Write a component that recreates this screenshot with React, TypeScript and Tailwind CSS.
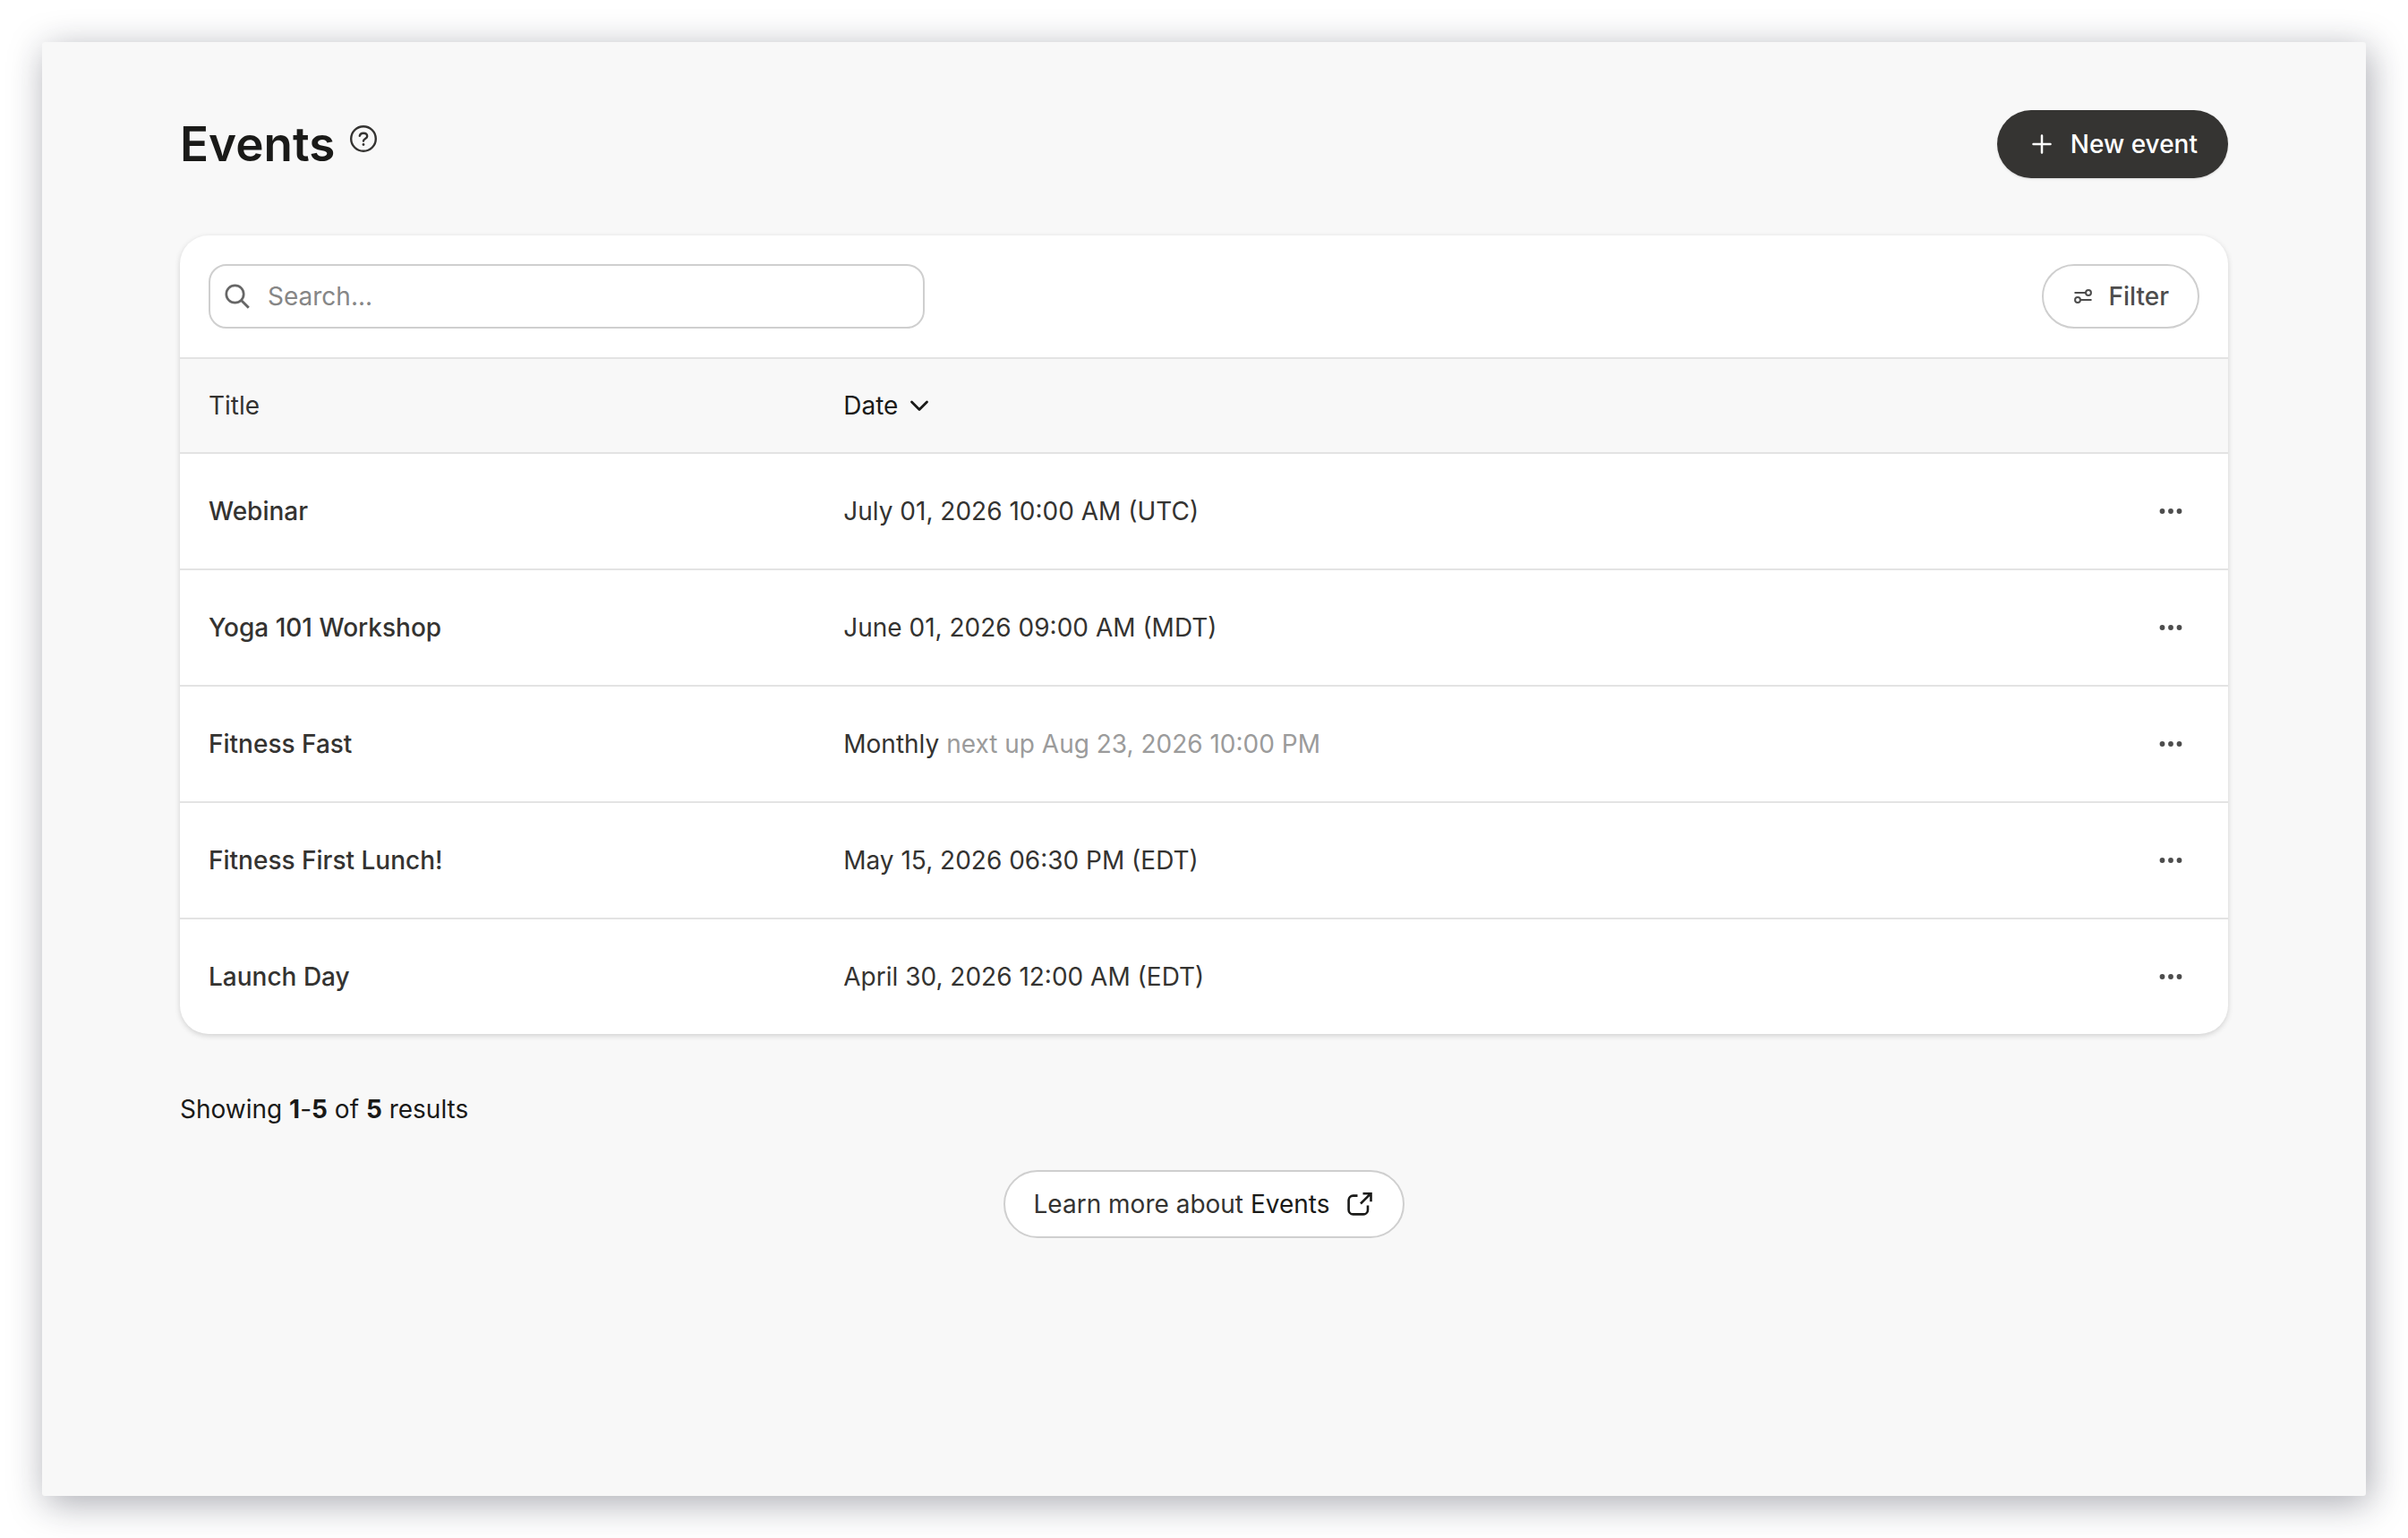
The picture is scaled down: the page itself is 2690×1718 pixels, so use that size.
import type { ReactNode } from 'react';

type EventRow = {
  title: string;
  date: string;
  next?: string;
};

const events: EventRow[] = [
  { title: 'Webinar', date: 'July 01, 2026 10:00 AM (UTC)' },
  { title: 'Yoga 101 Workshop', date: 'June 01, 2026 09:00 AM (MDT)' },
  { title: 'Fitness Fast', date: 'Monthly', next: 'next up Aug 23, 2026 10:00 PM' },
  { title: 'Fitness First Lunch!', date: 'May 15, 2026 06:30 PM (EDT)' },
  { title: 'Launch Day', date: 'April 30, 2026 12:00 AM (EDT)' },
];

function Icon({ className, children }: { className: string; children: ReactNode }) {
  return (
    <svg viewBox="0 0 32 32" fill="none" stroke="currentColor" aria-hidden="true" className={className}>
      {children}
    </svg>
  );
}

function PageHeader() {
  return (
    <header className="flex items-center justify-between">
      <div className="flex items-start gap-4">
        <h1 className="text-[53px] leading-[64px] font-semibold text-[#1a1a18]">Events</h1>
        <button type="button" aria-label="About events" className="mt-2.5 text-[#343331]">
          <Icon className="size-8">
            <circle cx="16" cy="16" r="13.8" strokeWidth="2.4" />
            <path
              d="M11.8 12.8c.4-1.900 2.100-3.100 4.200-3.100 2.500 0 4.200 1.400 4.200 3.500 0 2.700-4.200 2.900-4.200 5.300"
              strokeWidth="2.4"
              strokeLinecap="round"
            />
            <circle cx="16" cy="22.5" r="1.4" fill="currentColor" stroke="none" />
          </Icon>
        </button>
      </div>
      <button
        type="button"
        className="flex h-19 items-center gap-4 rounded-full bg-[#353432] px-[34px] font-medium text-white shadow-sm"
      >
        <Icon className="size-8">
          <path d="M16 6.500v19M6.500 16h19" strokeWidth="2.500" strokeLinecap="round" />
        </Icon>
        New event
      </button>
    </header>
  );
}

function Toolbar() {
  return (
    <div className="flex items-center justify-between border-b-2 border-[#e3e3e3] p-8">
      <label className="flex h-18 w-[800px] items-center gap-[18px] rounded-[20px] border-2 border-[#cfcfcf] px-3.5">
        <Icon className="size-8 shrink-0 text-[#666]">
          <circle cx="13.500" cy="13.500" r="9.700" strokeWidth="2.700" />
          <path d="M20.300 20.300l8.500 8.500" strokeWidth="2.900" />
        </Icon>
        <input
          type="search"
          aria-label="Search events"
          placeholder="Search..."
          className="min-w-0 flex-1 text-[#343331] outline-none placeholder:text-[#868686]"
        />
      </label>
      <button
        type="button"
        className="flex h-18 items-center gap-4 rounded-full border-2 border-[#cfcfcf] px-8 font-medium text-[#4d4d4d]"
      >
        <Icon className="size-6">
          <path d="M3.300 10.700H20M12 21.300h16.700" strokeWidth="2.700" />
          <circle cx="24" cy="10.700" r="3.900" strokeWidth="2.700" />
          <circle cx="8" cy="21.300" r="3.900" strokeWidth="2.700" />
        </Icon>
        Filter
      </button>
    </div>
  );
}

function EventsTable() {
  return (
    <table className="w-full table-fixed border-separate border-spacing-0 text-left text-[#343331]">
      <thead>
        <tr className="h-[106px] bg-[#f8f8f8]">
          <th scope="col" className="w-[31%] border-b-2 border-[#e3e3e3] px-8 font-normal">
            Title
          </th>
          <th scope="col" className="border-b-2 border-[#e3e3e3] px-8 font-normal" aria-sort="descending">
            <button type="button" className="flex items-center gap-2 text-[#1a1a18]">
              Date
              <Icon className="size-8">
                <path
                  d="M7.500 12l8.500 8.500 8.500-8.500"
                  strokeWidth="2.800"
                  strokeLinecap="round"
                  strokeLinejoin="round"
                />
              </Icon>
            </button>
          </th>
          <th scope="col" aria-label="Actions" className="w-32 border-b-2 border-[#e3e3e3]" />
        </tr>
      </thead>
      <tbody>
        {events.map((event) => (
          <tr key={event.title} className="group h-[130px] last:h-32">
            <td className="border-b-2 border-[#e3e3e3] px-8 font-medium group-last:border-b-0">{event.title}</td>
            <td className="border-b-2 border-[#e3e3e3] px-8 group-last:border-b-0">
              {event.date}
              {event.next && <span className="text-[#9b9b9b]"> {event.next}</span>}
            </td>
            <td className="border-b-2 border-[#e3e3e3] group-last:border-b-0">
              <button type="button" aria-label={`Actions for ${event.title}`} className="mx-auto block text-[#4d4d4d]">
                <svg viewBox="0 0 32 32" fill="currentColor" aria-hidden="true" className="size-8">
                  <circle cx="6.500" cy="16" r="2.900" />
                  <circle cx="16" cy="16" r="2.900" />
                  <circle cx="25.500" cy="16" r="2.900" />
                </svg>
              </button>
            </td>
          </tr>
        ))}
      </tbody>
    </table>
  );
}

export default function App() {
  return (
    <div className="flex min-h-screen bg-white p-[47px] font-['Inter',sans-serif] text-[28px] leading-10">
      <main className="flex-1 rounded-[3px] bg-[#f8f8f8] px-[154px] pt-19 shadow-[4px_8px_40px_rgba(25,28,45,0.37)]">
        <PageHeader />
        <section className="mt-16 overflow-hidden rounded-[32px] bg-white shadow-[0_2px_6px_rgba(0,0,0,0.16)]">
          <Toolbar />
          <EventsTable />
        </section>
        <p className="mt-16 text-[#1a1a18]">
          Showing <b>1</b>-<b>5</b> of <b>5</b> results
        </p>
        <a
          href="#learn-more"
          className="mx-auto mt-12 flex h-19 w-fit items-center gap-[18px] rounded-full border-2 border-[#cfcfcf] bg-white px-8 text-[#343331]"
        >
          <span>
            Learn more about <span className="text-[#1a1a18]">Events</span>
          </span>
          <Icon className="size-8 text-[#1a1a18]">
            <path
              d="M13.500 6.600H8.600a5 5 0 0 0-5 5v10.800a5 5 0 0 0 5 5h11.400a5 5 0 0 0 5-5V17.500M17 15.500L28 4.500M19.500 4.200h9v9"
              strokeWidth="2.600"
            />
          </Icon>
        </a>
      </main>
    </div>
  );
}
